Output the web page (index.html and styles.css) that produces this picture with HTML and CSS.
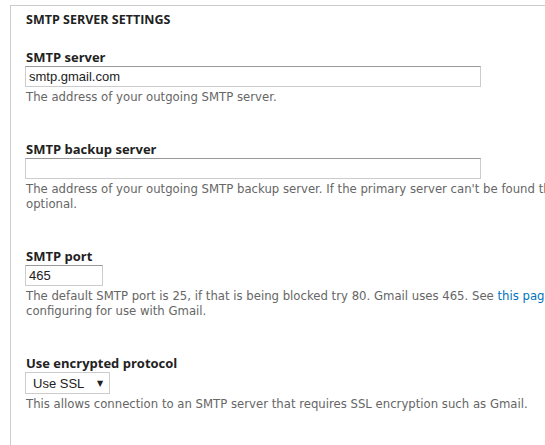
FILE: index.html
```html
<!DOCTYPE html>
<html lang="en">
<head>
  <meta charset="UTF-8">
  <meta name="viewport" content="width=device-width, initial-scale=1.0">
  <title>SMTP settings</title>
  <link rel="stylesheet" href="styles.css">
</head>
<body>
  <div class="settings">
    <div class="title">SMTP SERVER SETTINGS</div>

    <div class="form-item">
      <label for="smtp-host">SMTP server</label>
      <input type="text" id="smtp-host" class="text" value="smtp.gmail.com">
      <div class="description">The address of your outgoing SMTP server.</div>
    </div>

    <div class="form-item">
      <label for="smtp-backup">SMTP backup server</label>
      <input type="text" id="smtp-backup" class="text" value="">
      <div class="description">The address of your outgoing SMTP backup server. If the primary server can't be found this one will be tried. This is optional.</div>
    </div>

    <div class="form-item">
      <label for="smtp-port">SMTP port</label>
      <input type="text" id="smtp-port" class="text short" value="465">
      <div class="description">The default SMTP port is 25, if that is being blocked try 80. Gmail uses 465. See <a href="#">this page</a> for more information on configuring for use with Gmail.</div>
    </div>

    <div class="form-item">
      <label for="smtp-protocol">Use encrypted protocol</label>
      <div class="select-box">
        <select id="smtp-protocol">
          <option>Use SSL</option>
          <option>Use TLS</option>
          <option>No</option>
        </select>
        <span class="arrow">▼</span>
      </div>
      <div class="description">This allows connection to an SMTP server that requires SSL encryption such as Gmail.</div>
    </div>
  </div>
</body>
</html>
```

FILE: styles.css
```css
html, body {
  overflow: hidden;
}
body {
  margin: 0;
  background: #fff;
  font-family: 'DejaVu Sans', Verdana, sans-serif;
  color: #222;
}
.settings {
  width: 720px;
  margin: 5px 0 0 10px;
  padding: 6px 0 60px 14px;
  border: 1px solid #ccc;
}
.title {
  font-family: 'Open Sans', 'Noto Sans', sans-serif;
  font-size: 12.5px;
  font-weight: bold;
  line-height: 16px;
  margin-bottom: 21px;
  padding-left: 1px;
}
.form-item {
  margin-bottom: 36px;
}
.form-item label {
  display: block;
  font-family: 'Open Sans', 'Noto Sans', sans-serif;
  font-size: 13px;
  font-weight: bold;
  line-height: 16px;
  margin-bottom: 1px;
  padding-left: 1px;
}
input.text {
  display: block;
  box-sizing: border-box;
  width: 456px;
  height: 21px;
  margin: 0;
  padding: 2px 3px;
  border: 1px solid #ccc;
  border-top-color: #999;
  font-family: 'Liberation Sans', Arial, sans-serif;
  font-size: 13px;
  color: #222;
}
input.short {
  width: 78px;
}
.select-box {
  display: flex;
  align-items: center;
  box-sizing: border-box;
  width: 85px;
  height: 22px;
  border: 1px solid #ccc;
  background: #fff;
}
.select-box select {
  appearance: none;
  -webkit-appearance: none;
  border: none;
  background: transparent;
  padding: 0 0 0 7px;
  margin: 0;
  width: 71px;
  font-family: 'Liberation Sans', Arial, sans-serif;
  font-size: 13px;
  color: #222;
}
.arrow {
  font-size: 8px;
  color: #222;
  font-family: 'DejaVu Sans', sans-serif;
}
.description {
  margin-top: 3px;
  font-size: 11.7px;
  line-height: 15px;
  color: #666;
  padding-left: 1px;
}
.description a {
  color: #0074bd;
  text-decoration: none;
}
```
